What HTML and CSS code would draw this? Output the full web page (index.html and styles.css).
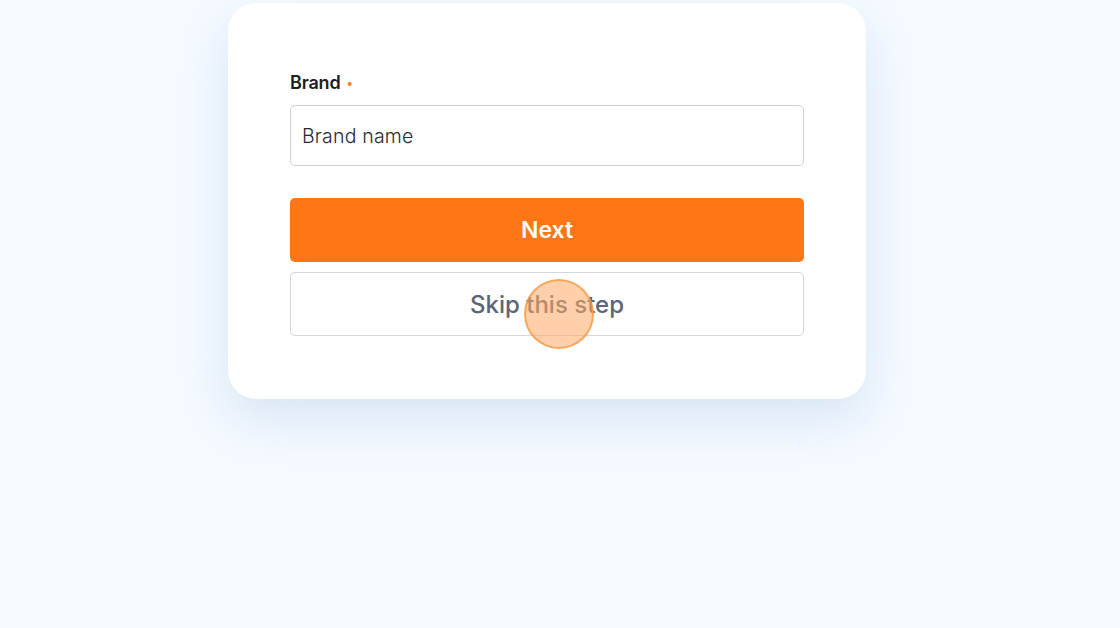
FILE: index.html
```html
<!DOCTYPE html>
<html>
<head>
<meta charset="utf-8">
<link rel="stylesheet" href="styles.css">
</head>
<body>
<div class="page">
  <div class="card">
    <label class="label">Brand <span class="req">•</span></label>
    <div class="input">Brand name</div>
    <button class="btn-next">Next</button>
    <button class="btn-skip">Skip this step<span class="click"></span></button>
  </div>
</div>
</body>
</html>
```
FILE: styles.css
```css
html, body {
  margin: 0;
  padding: 0;
  background: #f5faff;
  font-family: "Inter", "Noto Sans", sans-serif;
}
.page {
  width: 1120px;
  height: 628px;
  display: flex;
  justify-content: center;
  padding-top: 3px;
  box-sizing: border-box;
  padding-right: 26px;
}
.card {
  width: 638px;
  height: 396px;
  box-sizing: border-box;
  background: #fff;
  border-radius: 28px;
  box-shadow: 0 20px 50px rgba(180, 205, 230, 0.45);
  padding: 70px 62px 0 62px;
  display: flex;
  flex-direction: column;
}
.label {
  font-size: 18px;
  font-weight: 600;
  color: #1d1d1f;
  height: 20px;
  line-height: 20px;
  letter-spacing: -0.2px;
}
.req {
  color: #ff7a1a;
  font-size: 12px;
  vertical-align: 2px;
  margin-left: 2px;
}
.input {
  margin-top: 12px;
  height: 61px;
  box-sizing: border-box;
  border: 1px solid #cfcfd4;
  border-radius: 5px;
  padding: 0 11px;
  display: flex;
  align-items: center;
  font-size: 19.5px;
  font-weight: 300;
  color: #2a2a2e;
  letter-spacing: 0.2px;
}
.btn-next {
  margin-top: 32px;
  height: 64px;
  border: none;
  border-radius: 5px;
  background: #ff7614;
  color: #fff;
  font-family: inherit;
  font-size: 23px;
  font-weight: 600;
}
.btn-skip {
  position: relative;
  margin-top: 10px;
  height: 64px;
  border: 1.5px solid #d3d6dc;
  border-radius: 5px;
  background: #fff;
  color: #5b6478;
  font-family: inherit;
  font-size: 24px;
  font-weight: 500;
}
.click {
  position: absolute;
  left: 233px;
  top: 6px;
  width: 66px;
  height: 66px;
  border-radius: 50%;
  background: rgba(255, 170, 100, 0.55);
  border: 2.5px solid rgba(245, 150, 60, 0.7);
}
```
